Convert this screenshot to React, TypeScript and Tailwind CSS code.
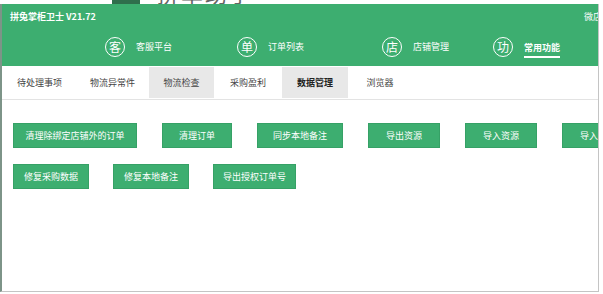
import React from 'react';

const FONT = { fontFamily: '"Noto Sans CJK SC", "Noto Sans", sans-serif' };

const navItems = [
  { icon: '客', label: '客服平台', w: 'w-[132px]' },
  { icon: '单', label: '订单列表', w: 'w-[145px]' },
  { icon: '店', label: '店铺管理', w: 'w-[111px]' },
  { icon: '功', label: '常用功能', w: '', active: true },
];

const tabs = [
  { label: '待处理事项', w: 'w-[73px]' },
  { label: '物流异常件', w: 'w-[73px]' },
  { label: '物流检查', w: 'w-[65px]', gray: true },
  { label: '采购盈利', w: 'w-[68px]' },
  { label: '数据管理', w: 'w-[66px]', gray: true, bold: true },
  { label: '浏览器', w: 'w-[64px]' },
];

const row1 = [
  { label: '清理除绑定店铺外的订单', w: 'w-[124px]' },
  { label: '清理订单', w: 'w-[70px]' },
  { label: '同步本地备注', w: 'w-[86px]' },
  { label: '导出资源', w: 'w-[72px]' },
  { label: '导入资源', w: 'w-[72px]' },
  { label: '导入订单', w: 'w-[72px]' },
];

const row2 = [
  { label: '修复采购数据', w: 'w-[76px]' },
  { label: '修复本地备注', w: 'w-[76px]' },
  { label: '导出授权订单号', w: 'w-[83px]' },
];

function ActionButton({ label, w }: { label: string; w: string }) {
  return (
    <button
      type="button"
      className={`${w} h-[25px] shrink-0 bg-[#3dae70] border border-[#36a166] text-white text-[9px] flex items-center justify-center whitespace-nowrap`}
    >
      {label}
    </button>
  );
}

export default function App() {
  return (
    <div className="w-[603px] h-[294px] bg-white overflow-hidden" style={FONT}>
      {/* strip of the window behind */}
      <div className="h-[4px] overflow-hidden">
        <div className="flex items-end -mt-[20px] h-[24px] pl-[112px] gap-[17px]">
          <div className="w-[28px] h-[24px] bg-[#2f6e4c]" />
          <span className="text-[22px] leading-[24px] text-[#666] tracking-[2px]">拼单助手</span>
        </div>
      </div>

      <div className="w-[599px] h-[288px] border-l-2 border-l-[#7d9488] border-r border-r-[#c4c4c4] border-b border-b-[#c4c4c4] overflow-hidden flex flex-col">
        {/* header */}
        <div className="h-[62px] bg-[#3dae70] flex flex-col shrink-0">
          <div className="h-[24px] flex items-center justify-between pl-[8px] pt-[1px]">
            <span className="text-white text-[9px] font-bold">拼兔掌柜卫士 V21.72</span>
            <span className="text-white text-[9px] whitespace-nowrap -mr-[4px]">微店</span>
          </div>
          <div className="h-[38px] flex items-center pl-[103px]">
            {navItems.map((n) => (
              <div key={n.label} className={`${n.w} shrink-0 flex items-center gap-[11px]`}>
                <div className="w-[20px] h-[20px] rounded-full border-[1.5px] border-white flex items-center justify-center text-white text-[12px] leading-none">
                  {n.icon}
                </div>
                <span
                  className={`text-white text-[9px] leading-[12px] ${
                    n.active ? 'border-b-2 border-white pb-[2px] mt-[6px] font-bold' : ''
                  }`}
                >
                  {n.label}
                </span>
              </div>
            ))}
          </div>
        </div>

        {/* tabs */}
        <div className="h-[34px] shrink-0 flex pl-[1px] pt-[1px] border-b border-[#e3e3e3] bg-white">
          {tabs.map((t) => (
            <div
              key={t.label}
              className={`${t.w} h-[31px] shrink-0 flex items-center justify-center text-[9px] ${
                t.gray ? 'bg-[#e8e8e8]' : ''
              } ${t.bold ? 'font-bold text-[#222]' : 'text-[#444]'}`}
            >
              {t.label}
            </div>
          ))}
        </div>

        {/* content */}
        <div className="flex-1 bg-white pt-[23px] pl-[11px] flex flex-col gap-[16px]">
          <div className="flex gap-[25px]">
            {row1.map((b) => (
              <ActionButton key={b.label} {...b} />
            ))}
          </div>
          <div className="flex gap-[24px]">
            {row2.map((b) => (
              <ActionButton key={b.label} {...b} />
            ))}
          </div>
        </div>
      </div>
    </div>
  );
}
